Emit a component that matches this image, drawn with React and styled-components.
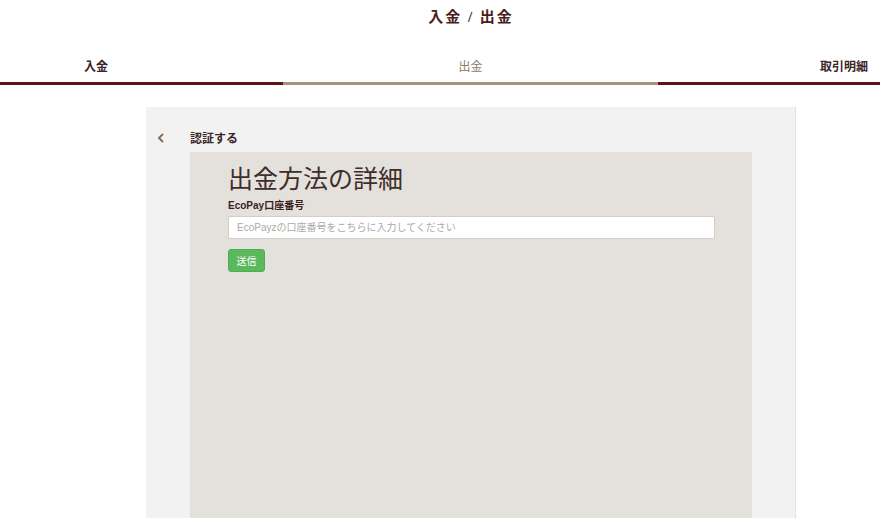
import React from 'react';
import styled, { createGlobalStyle } from 'styled-components';

const GlobalStyle = createGlobalStyle`
  html, body {
    margin: 0;
    padding: 0;
    background: #fff;
    font-family: "Liberation Sans", Arial, "Noto Sans CJK JP", sans-serif;
  }
`;

const Page = styled.div`
  width: 880px;
  height: 518px;
  overflow: hidden;
  display: flex;
  flex-direction: column;
`;

const Title = styled.h1`
  margin: 0;
  padding-top: 5px;
  padding-left: 62px;
  height: 30px;
  text-align: center;
  font-family: "Liberation Serif", "Noto Sans CJK JP", serif;
  font-size: 15px;
  font-weight: bold;
  letter-spacing: 2px;
  color: #4a1c1c;
`;

const Tabs = styled.div`
  display: grid;
  grid-template-columns: 283px 375px 1fr;
  margin-top: 13px;
`;

const Tab = styled.div`
  height: 37px;
  line-height: 18px;
  box-sizing: border-box;
  padding-top: 10px;
  font-size: 12px;
  font-weight: ${(p) => (p.active ? 'normal' : 'bold')};
  color: ${(p) => (p.active ? '#8c7a68' : '#3a2626')};
  text-align: ${(p) => p.align};
  padding-left: ${(p) => (p.align === 'left' ? '84px' : '0')};
  padding-right: ${(p) => (p.align === 'right' ? '12px' : '0')};
  border-bottom: 3px solid ${(p) => (p.active ? '#a8927a' : '#5c1515')};
`;

const Body = styled.div`
  flex: 1;
  display: flex;
  justify-content: flex-start;
  padding-top: 22px;
  padding-left: 146px;
`;

const Panel = styled.div`
  width: 649px;
  background: #f2f2f2;
  border-right: 1px dotted #d6d6d6;
  display: flex;
  flex-direction: column;
`;

const BackRow = styled.div`
  display: flex;
  align-items: center;
  height: 45px;
  box-sizing: border-box;
  padding-top: 16px;
`;

const Back = styled.span`
  width: 44px;
  padding-left: 11px;
  box-sizing: border-box;
  display: flex;
  align-items: center;
`;

const BackLabel = styled.span`
  font-size: 12px;
  font-weight: bold;
  color: #3a2626;
  font-family: "Liberation Serif", "Noto Sans CJK JP", serif;
`;

const Inner = styled.div`
  flex: 1;
  margin-left: 44px;
  width: 562px;
  background: #e4e0dc;
  padding: 12px 38px 0 38px;
  box-sizing: border-box;
`;

const Heading = styled.h2`
  margin: 0;
  font-family: "Liberation Serif", "Noto Sans CJK JP", serif;
  font-weight: normal;
  font-size: 25px;
  line-height: 32px;
  color: #3e2e2a;
`;

const Label = styled.label`
  display: block;
  margin-top: 1px;
  font-size: 10px;
  font-weight: bold;
  color: #3a1e1e;
`;

const Input = styled.input`
  display: block;
  margin-top: 4px;
  width: 487px;
  height: 23px;
  box-sizing: border-box;
  border: 1px solid #d2cfcb;
  border-radius: 2px;
  background: #fff;
  padding: 0 8px;
  font-size: 10px;
  font-family: inherit;
  color: #555;
  outline: none;
  &::placeholder {
    color: #aaa;
  }
`;

const Button = styled.button`
  margin-top: 10px;
  width: 37px;
  height: 23px;
  border: 1px solid #52ad52;
  border-radius: 3px;
  background: #5cb85c;
  color: #fff;
  font-size: 10px;
  font-family: inherit;
  padding: 0;
`;

const App = () => {
  return (
    <>
      <GlobalStyle />
      <Page>
        <Title>入金 / 出金</Title>
        <Tabs>
          <Tab align="left">入金</Tab>
          <Tab align="center" active>出金</Tab>
          <Tab align="right">取引明細</Tab>
        </Tabs>
        <Body>
          <Panel>
            <BackRow>
              <Back>
                <svg width="8" height="10" viewBox="0 0 8 10">
                  <path d="M6 1 L2 5 L6 9" fill="none" stroke="#8a6e5c" strokeWidth="2" />
                </svg>
              </Back>
              <BackLabel>認証する</BackLabel>
            </BackRow>
            <Inner>
              <Heading>出金方法の詳細</Heading>
              <Label>EcoPay口座番号</Label>
              <Input placeholder="EcoPayzの口座番号をこちらに入力してください" />
              <Button>送信</Button>
            </Inner>
          </Panel>
        </Body>
      </Page>
    </>
  );
};

export default App;
